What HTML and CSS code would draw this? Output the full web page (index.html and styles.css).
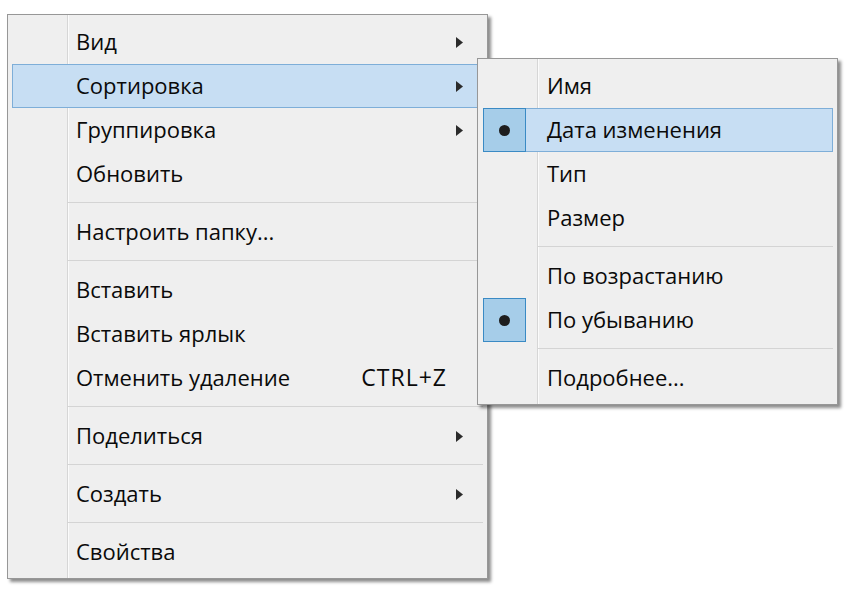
FILE: index.html
```html
<!DOCTYPE html>
<html lang="ru">
<head>
<meta charset="utf-8">
<title>Контекстное меню</title>
<link rel="stylesheet" href="styles.css">
</head>
<body>
<div class="stage">
  <div class="menu main-menu">
    <div class="item"><span class="icon"></span><span class="label">Вид</span><span class="arrow"><svg width="7" height="11" viewBox="0 0 7 11"><polygon points="0,0 7,5.5 0,11" fill="#2b2b2b"/></svg></span></div>
    <div class="item hover"><span class="icon"></span><span class="label">Сортировка</span><span class="arrow"><svg width="7" height="11" viewBox="0 0 7 11"><polygon points="0,0 7,5.5 0,11" fill="#2b2b2b"/></svg></span></div>
    <div class="item"><span class="icon"></span><span class="label">Группировка</span><span class="arrow"><svg width="7" height="11" viewBox="0 0 7 11"><polygon points="0,0 7,5.5 0,11" fill="#2b2b2b"/></svg></span></div>
    <div class="item"><span class="icon"></span><span class="label">Обновить</span></div>
    <div class="sep"></div>
    <div class="item"><span class="icon"></span><span class="label">Настроить папку...</span></div>
    <div class="sep"></div>
    <div class="item"><span class="icon"></span><span class="label">Вставить</span></div>
    <div class="item"><span class="icon"></span><span class="label">Вставить ярлык</span></div>
    <div class="item"><span class="icon"></span><span class="label">Отменить удаление</span><span class="shortcut">CTRL+Z</span></div>
    <div class="sep"></div>
    <div class="item"><span class="icon"></span><span class="label">Поделиться</span><span class="arrow"><svg width="7" height="11" viewBox="0 0 7 11"><polygon points="0,0 7,5.5 0,11" fill="#2b2b2b"/></svg></span></div>
    <div class="sep"></div>
    <div class="item"><span class="icon"></span><span class="label">Создать</span><span class="arrow"><svg width="7" height="11" viewBox="0 0 7 11"><polygon points="0,0 7,5.5 0,11" fill="#2b2b2b"/></svg></span></div>
    <div class="sep"></div>
    <div class="item"><span class="icon"></span><span class="label">Свойства</span></div>
  </div>

  <div class="menu sub-menu">
    <div class="item"><span class="icon"></span><span class="label">Имя</span></div>
    <div class="item hover checked"><span class="icon"><span class="dot"></span></span><span class="label">Дата изменения</span></div>
    <div class="item"><span class="icon"></span><span class="label">Тип</span></div>
    <div class="item"><span class="icon"></span><span class="label">Размер</span></div>
    <div class="sep"></div>
    <div class="item"><span class="icon"></span><span class="label">По возрастанию</span></div>
    <div class="item checked"><span class="icon"><span class="dot"></span></span><span class="label">По убыванию</span></div>
    <div class="sep"></div>
    <div class="item"><span class="icon"></span><span class="label">Подробнее...</span></div>
  </div>
</div>
</body>
</html>
```

FILE: styles.css
```css
* { box-sizing: border-box; }

html, body {
  margin: 0;
  padding: 0;
  background: #ffffff;
}

body {
  font-family: "Open Sans", "Noto Sans", "DejaVu Sans", sans-serif;
  font-size: 22px;
  color: #0a0a0a;
}

.stage {
  position: relative;
  width: 852px;
  height: 600px;
  overflow: hidden;
  padding: 14px 0 0 7px;
}

.menu {
  background-color: #efefef;
  background-image: linear-gradient(to right,
      transparent 59px, #d6d6d6 59px, #d6d6d6 60px,
      #fbfbfb 60px, #fbfbfb 61px, transparent 61px);
  background-origin: padding-box;
  background-clip: padding-box;
  border: 1px solid #979797;
  box-shadow: 3px 3px 3px rgba(0, 0, 0, 0.45);
  padding: 5px 4px 4px 4px;
  display: flex;
  flex-direction: column;
}

.main-menu {
  width: 481px;
}

.sub-menu {
  position: absolute;
  left: 477px;
  top: 58px;
  width: 361px;
  padding-left: 5px;
}

.item {
  height: 44px;
  display: flex;
  align-items: center;
  border: 1px solid transparent;
  white-space: nowrap;
}

.item.hover {
  background: #c7def3;
  border-color: #7eaed8;
}

.icon {
  width: 43px;
  align-self: stretch;
  margin: -1px 0 -1px -1px;
  border: 1px solid transparent;
  display: flex;
  align-items: center;
  justify-content: center;
  flex: none;
}

.checked .icon {
  background: #a6cde9;
  border-color: #3a8ac4;
}

.dot {
  width: 11px;
  height: 11px;
  border-radius: 50%;
  background: #1e1e1e;
}

.label {
  margin-left: 21px;
  padding-bottom: 2px;
  flex: 1;
}

.shortcut {
  margin-right: 35px;
  padding-bottom: 2px;
  font-size: 23px;
  letter-spacing: 1px;
}

.arrow {
  display: flex;
  margin-right: 19px;
}

.sep {
  height: 14px;
  display: flex;
  align-items: center;
  padding-left: 55px;
}

.sep::after {
  content: "";
  flex: 1;
  height: 1px;
  background: #d4d4d4;
  margin-top: -1px;
}
```
